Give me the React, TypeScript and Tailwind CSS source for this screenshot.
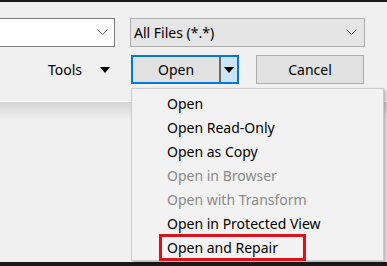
import * as React from "react";

const Chevron = () => (
  <svg width="11" height="7" viewBox="0 0 11 7" className="shrink-0">
    <path d="M0.5 0.5 L5.5 5.5 L10.5 0.5" fill="none" stroke="#606060" strokeWidth="1" />
  </svg>
);

const Caret = () => (
  <svg width="10" height="6" viewBox="0 0 10 6" className="shrink-0">
    <path d="M0 0 L10 0 L5 6 Z" fill="#000" />
  </svg>
);

const items = [
  { label: "Open", disabled: false },
  { label: "Open Read-Only", disabled: false },
  { label: "Open as Copy", disabled: false },
  { label: "Open in Browser", disabled: true },
  { label: "Open with Transform", disabled: true },
  { label: "Open in Protected View", disabled: false },
  { label: "Open and Repair", disabled: false },
];

export default function App() {
  return (
    <div
      className="relative w-[387px] h-[266px] overflow-hidden bg-[#f0f0f0] border-t-2 border-[#1a1a1a] text-black"
      style={{ fontFamily: '"Noto Sans", "Open Sans", sans-serif' }}
    >
      {/* top row: file name + filter */}
      <div className="flex mt-[16px] gap-[15px]">
        <div className="w-[115px] h-[29px] bg-white border border-[#7a7a7a] border-l-0 flex items-center justify-end pr-[6px]">
          <Chevron />
        </div>
        <div className="w-[235px] h-[29px] bg-[#e5e5e5] border border-[#adadad] flex items-center justify-between pl-[3px] pr-[7px] text-[14px]">
          <span>All Files (*.*)</span>
          <Chevron />
        </div>
      </div>

      {/* second row: tools, open, cancel */}
      <div className="flex mt-[8px] items-center">
        <div className="w-[131px] flex items-center justify-end gap-[18px] pr-[21px] text-[14px]">
          <span>Tools</span>
          <Caret />
        </div>
        <div className="w-[108px] h-[29px] border-2 border-[#0078d7] bg-[#e1e1e1] flex">
          <div className="flex-1 flex items-center justify-center text-[14px] border-r-2 border-[#6a6a6a]">
            Open
          </div>
          <div className="w-[16px] bg-[#cce4f7] flex items-center justify-center">
            <Caret />
          </div>
        </div>
        <div className="ml-[17px] w-[108px] h-[29px] border border-[#adadad] bg-[#e1e1e1] flex items-center justify-center text-[14px]">
          Cancel
        </div>
      </div>

      {/* lower pane edge */}
      <div className="mt-[17px] h-px bg-white" />
      <div className="h-[18px] bg-gradient-to-b from-[#d4d4d4] to-[#f0f0f0]" />

      {/* bottom dark strip */}
      <div className="absolute left-0 right-0 bottom-0 h-[4px] bg-[#1a1a1a]" />

      {/* dropdown menu */}
      <div className="absolute left-[131px] top-[86px] w-[253px] bg-[#f2f2f2] border border-[#cccccc] shadow-[2px_2px_3px_rgba(0,0,0,0.25)] pt-[2px] pb-px">
        {items.map((it) => (
          <div
            key={it.label}
            className={`h-[24px] flex items-center pl-[35px] text-[14px] ${
              it.disabled ? "text-[#8a8a8a]" : "text-black"
            }`}
          >
            {it.label}
          </div>
        ))}
        <div className="absolute left-[27px] top-[145px] w-[147px] h-[27px] border-[3px] border-[#d7141d]" />
      </div>
    </div>
  );
}
